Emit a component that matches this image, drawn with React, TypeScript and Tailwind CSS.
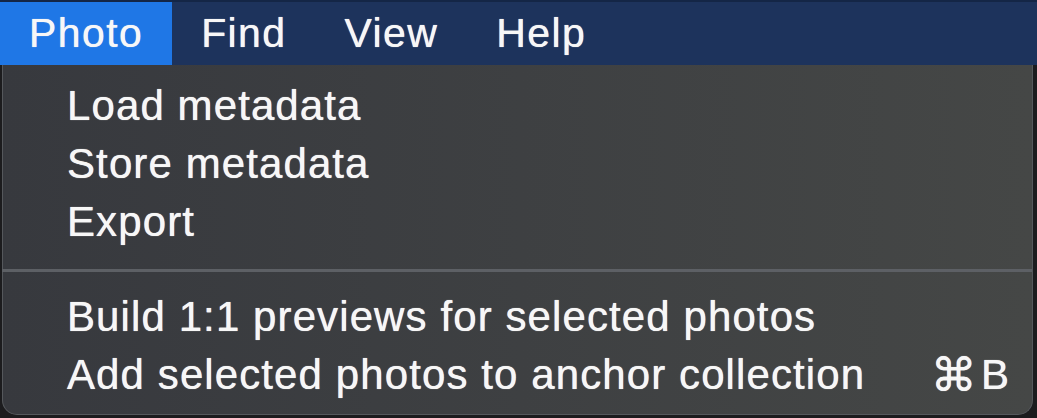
import React from 'react';

const menus = ['Photo', 'Find', 'View', 'Help'];

type Item = { label: string; shortcut?: string };

const groups: Item[][] = [
  [{ label: 'Load metadata' }, { label: 'Store metadata' }, { label: 'Export' }],
  [
    { label: 'Build 1:1 previews for selected photos' },
    { label: 'Add selected photos to anchor collection', shortcut: 'B' },
  ],
];

export default function App() {
  return (
    <div className="w-[1037px] h-[418px] bg-[#1c1c1e] flex flex-col overflow-hidden font-['Liberation_Sans',Arial,sans-serif] text-[#f7f7f7] [text-shadow:0_0_0.8px_#ffffff]">
      <div className="h-[65px] flex shrink-0 bg-[#1d335c] border-t-2 border-[#142646]">
        {menus.map((m, i) => (
          <div
            key={m}
            className={`h-full flex items-center px-[29px] text-[41px] tracking-[1.4px] ${
              i === 0 ? 'bg-[#1f77e6]' : ''
            }`}
          >
            {m}
          </div>
        ))}
      </div>
      <div className="h-[350px] mr-[4px] ml-[2px] flex flex-col rounded-b-[15px] border-l border-r border-b border-[#55585c] bg-gradient-to-r from-[#37393e] to-[#454746] pt-[12px] pb-[10px]">
        {groups.map((g, gi) => (
          <React.Fragment key={gi}>
            {gi > 0 && <div className="h-[3px] bg-[#5d6065] mt-[18px] mb-[16px] -ml-px" />}
            {g.map((it) => (
              <div
                key={it.label}
                className="h-[58px] flex items-center pl-[64px] pr-[22px] text-[42px] leading-[58px] tracking-[1.1px]"
              >
                <span className="flex-1">{it.label}</span>
                {it.shortcut && (
                  <span className="flex items-center">
                    <span className="font-['DejaVu_Sans',sans-serif] text-[46px] mr-[3px]">⌘</span>
                    <span>{it.shortcut}</span>
                  </span>
                )}
              </div>
            ))}
          </React.Fragment>
        ))}
      </div>
    </div>
  );
}
